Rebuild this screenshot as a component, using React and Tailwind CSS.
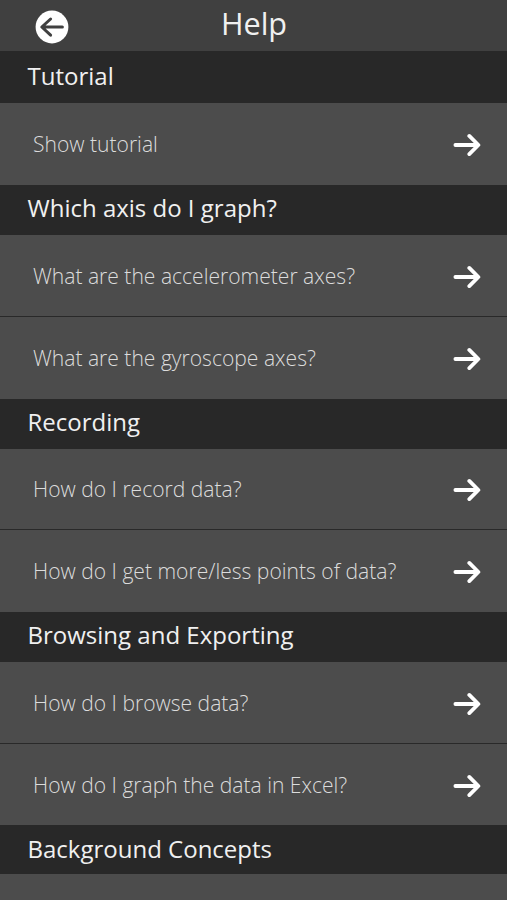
import React from 'react';

const sections = [
  {
    title: 'Tutorial',
    height: 'h-[52px] pb-0.5',
    items: [{ label: 'Show tutorial', height: 'h-[82px]' }],
  },
  {
    title: 'Which axis do I graph?',
    height: 'h-[50px] pb-1',
    items: [
      { label: 'What are the accelerometer axes?', height: 'h-[82px]' },
      { label: 'What are the gyroscope axes?', height: 'h-[82px]' },
    ],
  },
  {
    title: 'Recording',
    height: 'h-[50px] pb-1',
    items: [
      { label: 'How do I record data?', height: 'h-[81px]' },
      { label: 'How do I get more/less points of data?', height: 'h-[82px]' },
    ],
  },
  {
    title: 'Browsing and Exporting',
    height: 'h-[50px] pb-1',
    items: [
      { label: 'How do I browse data?', height: 'h-[82px]' },
      { label: 'How do I graph the data in Excel?', height: 'h-[81px]' },
    ],
  },
  { title: 'Background Concepts', height: 'h-[49px] pb-0.5', items: [] },
];

function BackIcon() {
  return (
    <svg className="block h-[34px] w-[34px]" viewBox="0 0 34 34" fill="none">
      <circle cx="17" cy="17" r="16.4" fill="#fff" />
      <path
        d="M27.4 17H7.2M15.6 9L6.8 17L15.6 25.2"
        stroke="#404040"
        strokeWidth="3"
        strokeLinecap="round"
        strokeLinejoin="round"
      />
    </svg>
  );
}

function ArrowIcon() {
  return (
    <svg className="block h-6 w-7" viewBox="0 0 28 24" fill="none">
      <path
        d="M2.4 12H25M16.3 2.9L25.4 12L16.3 21.1"
        stroke="#fff"
        strokeWidth="3.8"
        strokeLinecap="round"
        strokeLinejoin="round"
      />
    </svg>
  );
}

function Row({ label, height, last }) {
  return (
    <button
      className={`flex w-full items-center justify-between bg-[#4c4c4c] pt-0.5 pr-[26px] pl-[33px] text-left ${height} ${last ? '' : 'border-b border-[#292929]'}`}
    >
      <span className="-mt-0.5 text-[21.08px] leading-8 font-light whitespace-nowrap text-[#dcdcdc]">{label}</span>
      <ArrowIcon />
    </button>
  );
}

export default function App() {
  return (
    <div className="flex h-[900px] w-[507px] flex-col overflow-hidden bg-[#4c4c4c] font-['Open_Sans',sans-serif]">
      <header className="grid h-[51px] shrink-0 grid-cols-[1fr_auto_1fr] items-center bg-[#404040]">
        <button className="w-fit pt-0.5 pl-[35px]" aria-label="Back">
          <BackIcon />
        </button>
        <h1 className="-mt-1 pl-px text-[30.6px] leading-none text-[#f0f0f0]">Help</h1>
      </header>
      {sections.map((section) => (
        <section key={section.title} className="shrink-0">
          <h2
            className={`flex items-center bg-[#282828] pl-[27.5px] text-2xl whitespace-nowrap text-[#f0f0f0] ${section.height}`}
          >
            {section.title}
          </h2>
          {section.items.map((item, i) => (
            <Row
              key={item.label}
              label={item.label}
              height={item.height}
              last={i === section.items.length - 1}
            />
          ))}
        </section>
      ))}
    </div>
  );
}
